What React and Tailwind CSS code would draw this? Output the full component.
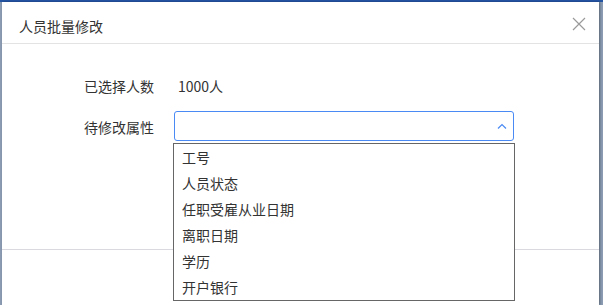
const options = ["工号", "人员状态", "任职受雇从业日期", "离职日期", "学历", "开户银行"];

const font = { fontFamily: '"Microsoft YaHei", "Noto Sans CJK SC", "Liberation Sans", sans-serif' };

export default function App() {
  return (
    <div className="w-[603px] h-[305px] overflow-hidden bg-[#8a9bb2]" style={font}>
      <div className="h-[2px] bg-[#2455a4]" />
      <div className="relative ml-[2px] w-[597px] h-[303px] bg-white text-[#333] text-[14px] shadow-[1px_0_2px_rgba(0,0,0,0.35)]">
        {/* header */}
        <div className="h-[42px] flex items-center justify-between pl-[17px] pr-[13px] border-b border-[#e3e3e3]">
          <span className="pt-[7px]">人员批量修改</span>
          <svg width="14" height="14" viewBox="0 0 14 14" className="mt-[2px]" stroke="#9a9a9a" strokeWidth="1.2" fill="none">
            <path d="M1 1L13 13M13 1L1 13" />
          </svg>
        </div>

        {/* body */}
        <div className="h-[206px] pt-[27px] border-b border-[#d9d9df]">
          <div className="flex items-center h-[30px]">
            <div className="w-[152px] text-right">已选择人数</div>
            <div className="ml-[24px]">1000人</div>
          </div>
          <div className="flex items-center h-[30px] mt-[10px]">
            <div className="w-[152px] text-right pt-[3px]">待修改属性</div>
            <div className="ml-[20px] w-[340px] h-[30px] border border-[#4a8af4] rounded-[3px] flex items-center justify-end pr-[6px]">
              <svg width="10" height="6" viewBox="0 0 10 6" stroke="#4a8af4" strokeWidth="1.2" fill="none">
                <path d="M1 5.5L5 1.5L9 5.5" />
              </svg>
            </div>
          </div>
        </div>

        {/* dropdown */}
        <div className="absolute left-[171px] top-[141px] w-[342px] h-[158px] border border-[#666] bg-white">
          {options.map((o) => (
            <div key={o} className="h-[26px] leading-[26px] pl-[8px]">
              {o}
            </div>
          ))}
        </div>
      </div>
    </div>
  );
}
